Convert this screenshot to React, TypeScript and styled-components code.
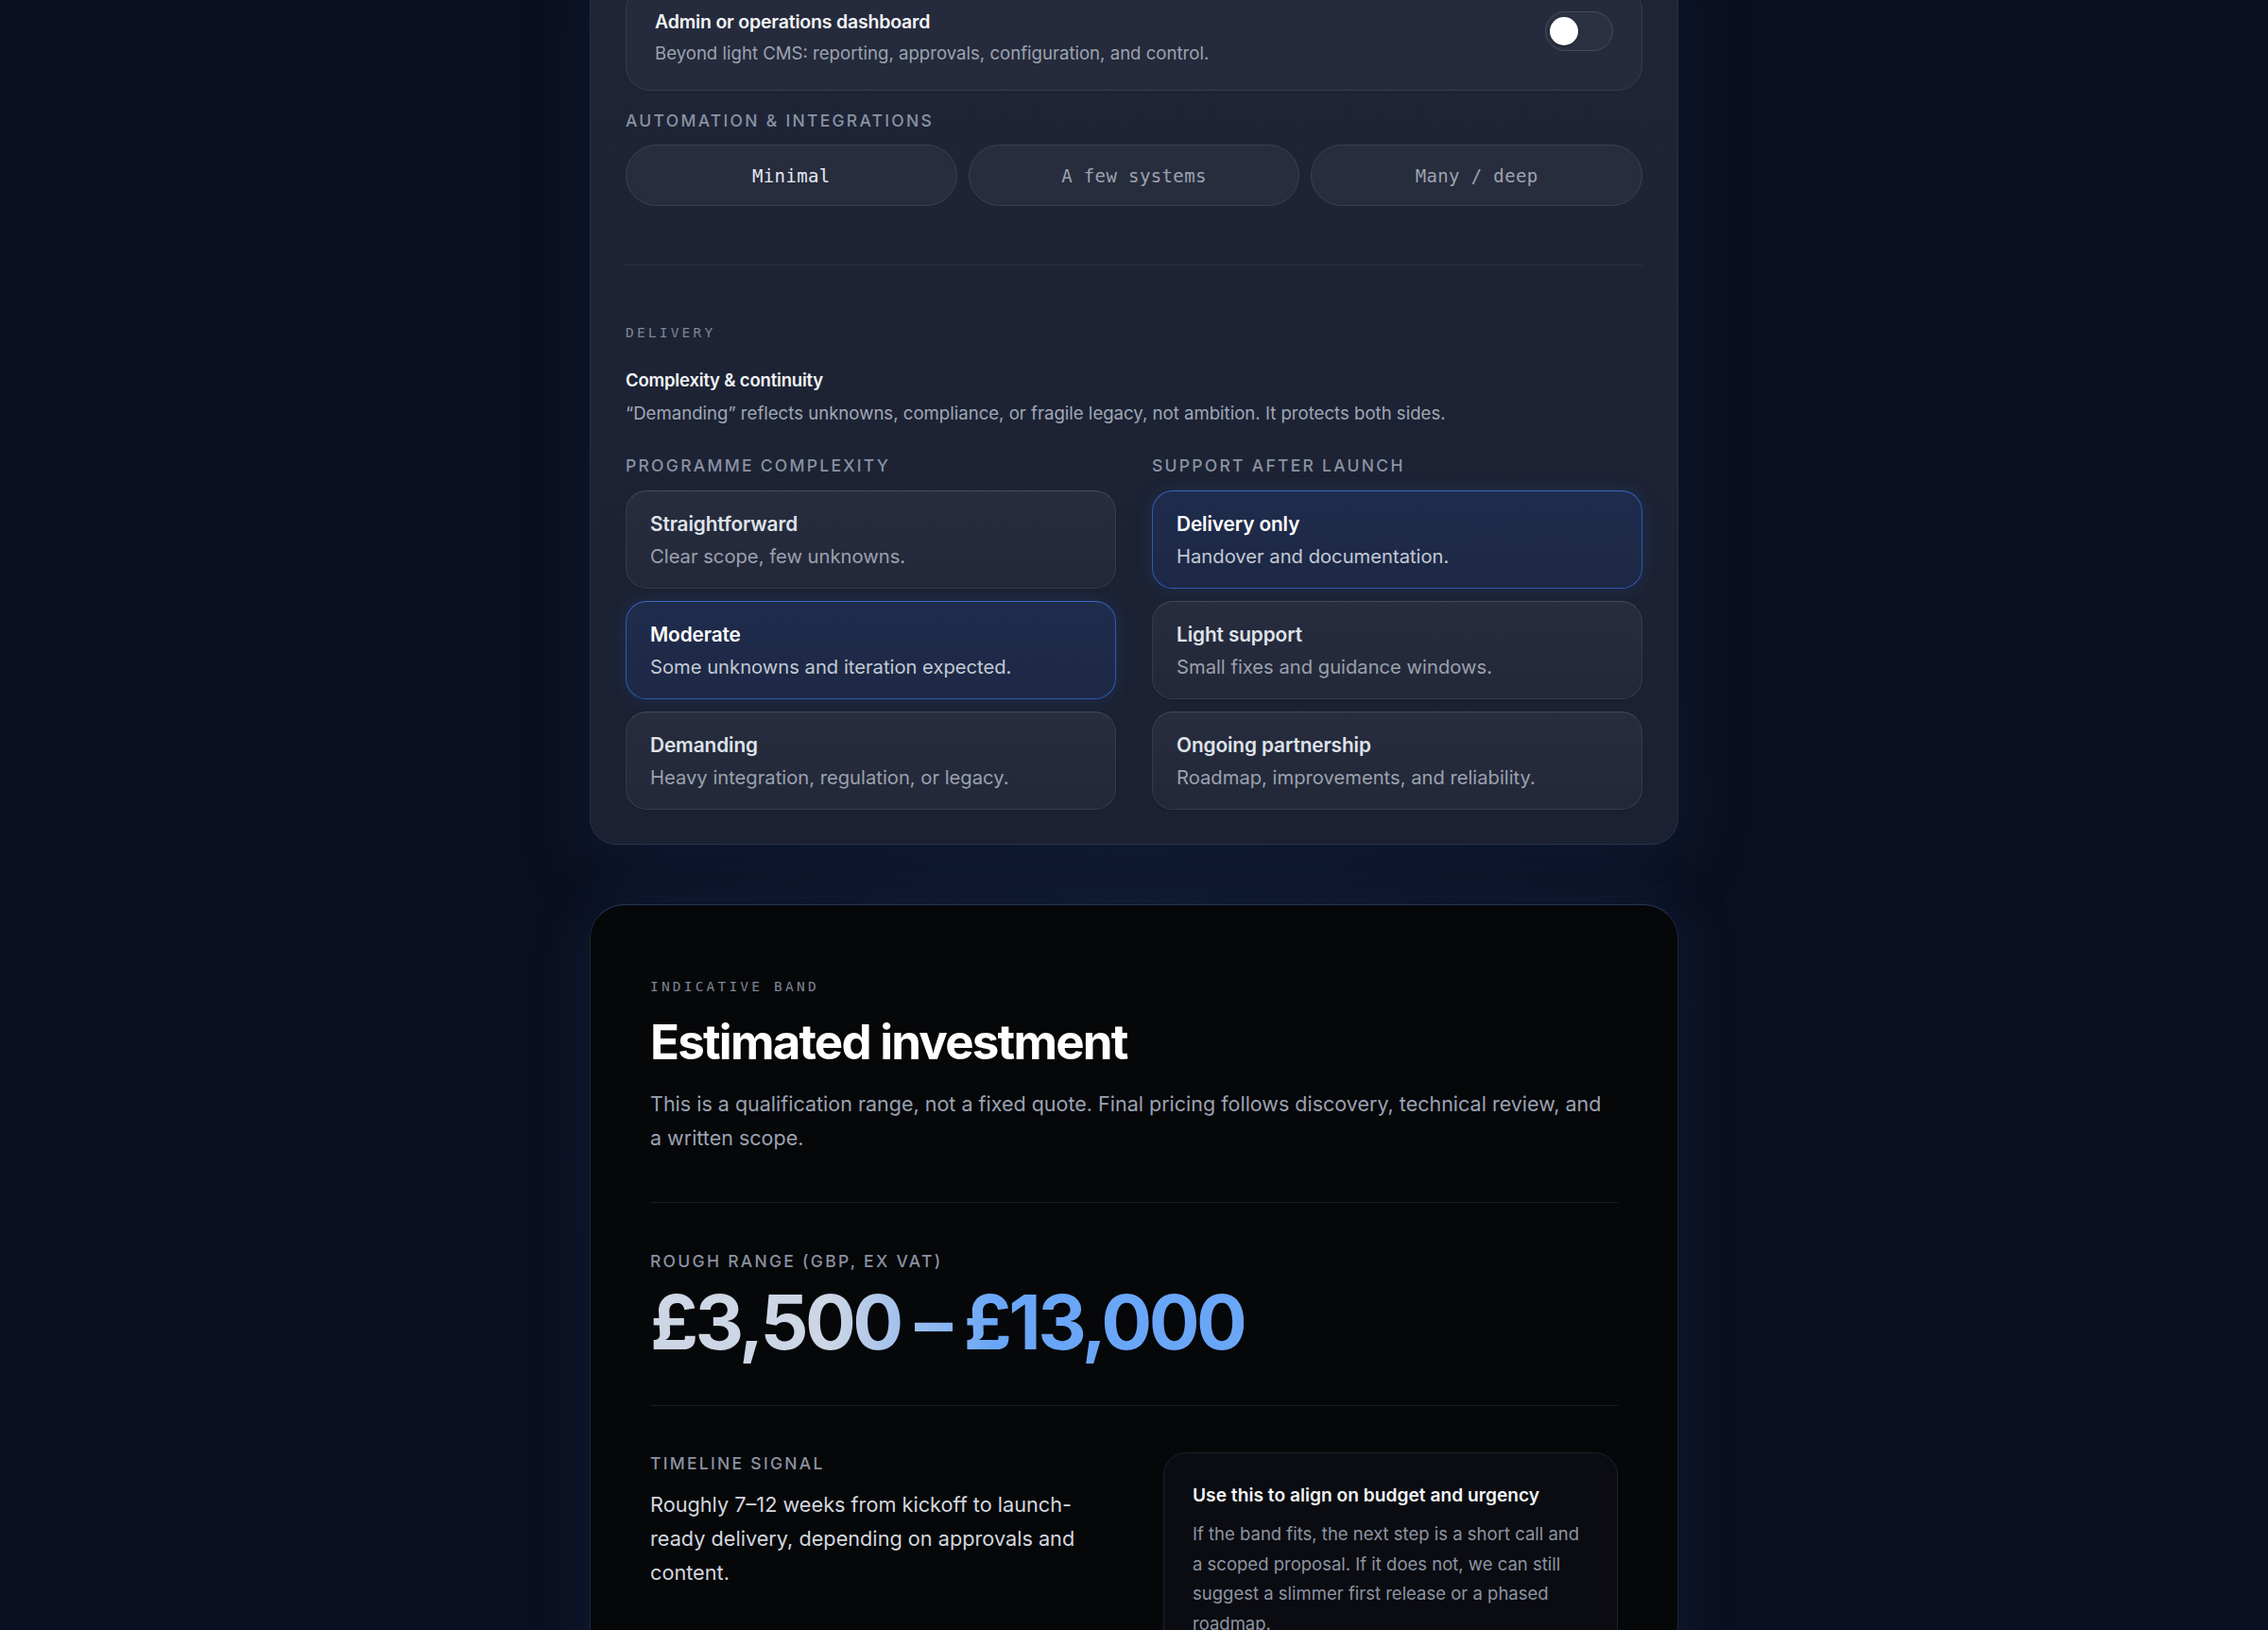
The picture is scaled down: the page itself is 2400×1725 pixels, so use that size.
import React from "react";
import styled, { createGlobalStyle } from "styled-components";

const GlobalStyle = createGlobalStyle`
    html, body {
        margin: 0;
        padding: 0;
        background: #0b1020;
    }
    body {
        font-family: Inter, "Noto Sans", "Liberation Sans", sans-serif;
        color: #e5e7eb;
        -webkit-font-smoothing: antialiased;
    }
    * {
        box-sizing: border-box;
    }
`;

const complexity = [
    { title: "Straightforward", text: "Clear scope, few unknowns." },
    { title: "Moderate", text: "Some unknowns and iteration expected." },
    { title: "Demanding", text: "Heavy integration, regulation, or legacy." },
];

const support = [
    { title: "Delivery only", text: "Handover and documentation." },
    { title: "Light support", text: "Small fixes and guidance windows." },
    { title: "Ongoing partnership", text: "Roadmap, improvements, and reliability." },
];

const integrations = ["Minimal", "A few systems", "Many / deep"];

const App: React.FC = () => {
    const selectedComplexity = 1;
    const selectedSupport = 0;
    const selectedIntegration = 0;

    return (
        <>
            <GlobalStyle />
            <Page>
                <Stack>
                    <ConfigPanel>
                        <ToggleCard>
                            <ToggleText>
                                <CardTitle>Admin or operations dashboard</CardTitle>
                                <CardText>
                                    Beyond light CMS: reporting, approvals, configuration, and control.
                                </CardText>
                            </ToggleText>
                            <Toggle aria-label="Admin or operations dashboard">
                                <Knob />
                            </Toggle>
                        </ToggleCard>

                        <FieldLabel $top={20}>Automation &amp; integrations</FieldLabel>
                        <PillRow>
                            {integrations.map((item, i) => (
                                <Pill key={item} $active={i === selectedIntegration}>
                                    {item}
                                </Pill>
                            ))}
                        </PillRow>

                        <Divider $top={62} />

                        <MonoLabel $top={61}>Delivery</MonoLabel>
                        <SectionTitle>Complexity &amp; continuity</SectionTitle>
                        <SectionText>
                            “Demanding” reflects unknowns, compliance, or fragile legacy, not ambition. It
                            protects both sides.
                        </SectionText>

                        <Columns>
                            <Column>
                                <FieldLabel $top={0}>Programme complexity</FieldLabel>
                                <OptionList>
                                    {complexity.map((o, i) => (
                                        <Option key={o.title} $active={i === selectedComplexity}>
                                            <OptionTitle $active={i === selectedComplexity}>{o.title}</OptionTitle>
                                            <OptionText $active={i === selectedComplexity}>{o.text}</OptionText>
                                        </Option>
                                    ))}
                                </OptionList>
                            </Column>
                            <Column>
                                <FieldLabel $top={0}>Support after launch</FieldLabel>
                                <OptionList>
                                    {support.map((o, i) => (
                                        <Option key={o.title} $active={i === selectedSupport}>
                                            <OptionTitle $active={i === selectedSupport}>{o.title}</OptionTitle>
                                            <OptionText $active={i === selectedSupport}>{o.text}</OptionText>
                                        </Option>
                                    ))}
                                </OptionList>
                            </Column>
                        </Columns>
                    </ConfigPanel>

                    <EstimatePanel>
                        <MonoLabel $top={0}>Indicative band</MonoLabel>
                        <Heading>Estimated investment</Heading>
                        <Lead>
                            This is a qualification range, not a fixed quote. Final pricing follows discovery,
                            technical review, and a written scope.
                        </Lead>

                        <Divider $top={50} $dark />

                        <FieldLabel $top={50}>Rough range (GBP, ex VAT)</FieldLabel>
                        <PriceRow>
                            <Price>£3,500 – £13,000</Price>
                        </PriceRow>

                        <Divider $top={44} $dark />

                        <SignalGrid>
                            <div>
                                <FieldLabel $top={0}>Timeline signal</FieldLabel>
                                <SignalText>
                                    Roughly 7–12 weeks from kickoff to launch-ready delivery, depending on
                                    approvals and content.
                                </SignalText>
                            </div>
                            <NoteCard>
                                <NoteTitle>Use this to align on budget and urgency</NoteTitle>
                                <NoteText>
                                    If the band fits, the next step is a short call and a scoped proposal. If it
                                    does not, we can still suggest a slimmer first release or a phased roadmap.
                                </NoteText>
                            </NoteCard>
                        </SignalGrid>
                    </EstimatePanel>
                </Stack>
            </Page>
        </>
    );
};

export default App;

const Page = styled.div`
    min-height: 1725px;
    height: 1725px;
    overflow: hidden;
    display: flex;
    justify-content: center;
    background: radial-gradient(ellipse 900px 1200px at 50% 60%, #0f172b 0%, #0b1020 70%);
`;

const Stack = styled.div`
    width: 1152px;
    margin-top: -53px;
    display: flex;
    flex-direction: column;
    gap: 63px;
`;

const ConfigPanel = styled.section`
    background: linear-gradient(180deg, #1f2537 0%, #1b2132 100%);
    border: 1px solid #2a3145;
    border-radius: 28px;
    padding: 36px 37px 36px;
    box-shadow: 0 20px 70px rgba(24, 40, 80, 0.35);
`;

const ToggleCard = styled.div`
    display: flex;
    align-items: flex-start;
    justify-content: space-between;
    padding: 24px 30px;
    background: #252a3c;
    border: 1px solid #353b4d;
    border-radius: 26px;
`;

const ToggleText = styled.div`
    display: flex;
    flex-direction: column;
    gap: 4px;
`;

const CardTitle = styled.div`
    font-size: 19.5px;
    line-height: 28px;
    font-weight: 600;
    color: #f3f4f6;
    letter-spacing: -0.01em;
`;

const CardText = styled.div`
    font-size: 18.6px;
    line-height: 30px;
    color: #9ca3af;
`;

const Toggle = styled.div`
    position: relative;
    margin-top: 3px;
    width: 72px;
    height: 42px;
    border-radius: 999px;
    background: #2c3142;
    border: 1.5px solid #454b5c;
`;

const Knob = styled.span`
    position: absolute;
    left: 4px;
    top: 4.5px;
    width: 30px;
    height: 30px;
    border-radius: 50%;
    background: #ffffff;
    box-shadow: 0 1px 3px rgba(0, 0, 0, 0.4);
`;

const FieldLabel = styled.div<{ $top: number }>`
    margin-top: ${(p) => p.$top}px;
    font-size: 17.5px;
    line-height: 24px;
    font-weight: 500;
    letter-spacing: 0.13em;
    text-transform: uppercase;
    color: #8a92a3;
`;

const MonoLabel = styled.div<{ $top: number }>`
    margin-top: ${(p) => p.$top}px;
    font-family: "DejaVu Sans Mono", "Liberation Mono", monospace;
    font-size: 14.5px;
    line-height: 20px;
    letter-spacing: 0.22em;
    text-transform: uppercase;
    color: #7d8595;
`;

const PillRow = styled.div`
    margin-top: 13px;
    display: grid;
    grid-template-columns: repeat(3, 1fr);
    gap: 12px;
`;

const Pill = styled.button<{ $active?: boolean }>`
    height: 65px;
    border-radius: 999px;
    background: #282d3e;
    border: 1.5px solid #3a4052;
    font-family: "DejaVu Sans Mono", "Liberation Mono", monospace;
    font-size: 19px;
    letter-spacing: 0.02em;
    color: ${(p) => (p.$active ? "#e5e9f0" : "#9ca3af")};
    cursor: pointer;
`;

const Divider = styled.hr<{ $top: number; $dark?: boolean }>`
    margin: ${(p) => p.$top}px 0 0;
    border: none;
    height: 1px;
    background: ${(p) => (p.$dark ? "#151b29" : "#2a3142")};
`;

const SectionTitle = styled.div`
    margin-top: 27px;
    font-size: 18.5px;
    line-height: 26px;
    font-weight: 600;
    color: #f3f4f6;
    letter-spacing: -0.01em;
`;

const SectionText = styled.div`
    margin-top: 8px;
    font-size: 18.6px;
    line-height: 28px;
    color: #a0a7b4;
`;

const Columns = styled.div`
    margin-top: 30px;
    display: grid;
    grid-template-columns: 1fr 1fr;
    gap: 38px;
`;

const Column = styled.div`
    display: flex;
    flex-direction: column;
`;

const OptionList = styled.div`
    margin-top: 14px;
    display: flex;
    flex-direction: column;
    gap: 13px;
`;

const Option = styled.div<{ $active?: boolean }>`
    height: 104px;
    padding: 21px 25px 0;
    border-radius: 22px;
    background: ${(p) =>
        p.$active
            ? "linear-gradient(180deg, #1f2c4c 0%, #1d2845 100%)"
            : "linear-gradient(180deg, #272c3e 0%, #232839 100%)"};
    border: 1.5px solid ${(p) => (p.$active ? "#2d5bb3" : "#363c4e")};
    border-top-color: ${(p) => (p.$active ? "#3a68c0" : "#454b5c")};
    box-shadow: ${(p) =>
        p.$active ? "0 0 18px rgba(45, 100, 200, 0.18)" : "0 1px 2px rgba(0, 0, 0, 0.15)"};
`;

const OptionTitle = styled.div<{ $active?: boolean }>`
    font-size: 20.8px;
    line-height: 28px;
    font-weight: 600;
    color: ${(p) => (p.$active ? "#ffffff" : "#dfe3ea")};
    letter-spacing: -0.005em;
`;

const OptionText = styled.div<{ $active?: boolean }>`
    margin-top: 6px;
    font-size: 20.2px;
    line-height: 28px;
    color: ${(p) => (p.$active ? "#c3c9d4" : "#9ba1ad")};
`;

const EstimatePanel = styled.section`
    background: #060709;
    border: 1px solid #1e2638;
    border-top-color: #2a3650;
    border-radius: 36px;
    padding: 76px 63px 64px;
    box-shadow: 0 0 60px rgba(30, 55, 110, 0.25);
`;

const Heading = styled.h2`
    margin: 19px 0 0;
    font-size: 51px;
    line-height: 60px;
    font-weight: 700;
    letter-spacing: -0.035em;
    color: #ffffff;
`;

const Lead = styled.p`
    margin: 17px 0 0;
    font-size: 21.5px;
    line-height: 36px;
    color: #9ba2b2;
`;

const PriceRow = styled.div`
    margin-top: 8px;
`;

const Price = styled.span`
    display: inline-block;
    font-size: 80px;
    line-height: 88px;
    font-weight: 700;
    letter-spacing: -0.045em;
    background: linear-gradient(90deg, #cdd6e4 0%, #cdd6e4 30%, #6aa6f8 58%, #6aa6f8 100%);
    -webkit-background-clip: text;
    background-clip: text;
    color: transparent;
`;

const SignalGrid = styled.div`
    margin-top: 49px;
    display: grid;
    grid-template-columns: 1fr 1fr;
    gap: 62px;
    align-items: start;
`;

const SignalText = styled.p`
    margin: 13px 0 0;
    font-size: 21.7px;
    line-height: 36px;
    color: #d3d7df;
`;

const NoteCard = styled.div`
    margin-top: 0;
    padding: 31px 28px 31px 30px;
    border-radius: 24px;
    background: #0b0c11;
    border: 1px solid #1a2132;
`;

const NoteTitle = styled.div`
    font-size: 19.2px;
    line-height: 26px;
    font-weight: 600;
    color: #f1f3f6;
`;

const NoteText = styled.p`
    margin: 13px 0 0;
    font-size: 18.5px;
    line-height: 31.5px;
    color: #8d94a2;
`;
